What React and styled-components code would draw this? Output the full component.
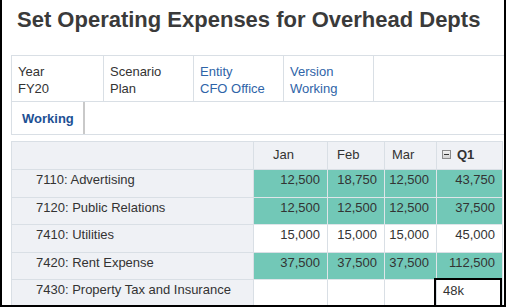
import React from "react";
import styled, { createGlobalStyle } from "styled-components";

const GlobalStyle = createGlobalStyle`
    html, body {
        margin: 0;
        padding: 0;
        background: #ffffff;
    }
    body {
        font-family: "Liberation Sans", Arial, sans-serif;
        color: #333333;
    }
`;

const LINE = "#d9dfe5";
const TEAL = "#72c8b7";
const SHADE = "#eff1f5";

const Frame = styled.div`
    width: 506px;
    height: 307px;
    box-sizing: border-box;
    border: 2px solid #000;
    border-top: none;
    overflow: hidden;
    background: #fff;
`;

const Title = styled.h1`
    margin: 0;
    padding: 7px 0 0 15px;
    font-size: 22px;
    line-height: 26px;
    font-weight: bold;
    color: #3a3a3a;
    white-space: nowrap;
`;

const Content = styled.div`
    padding: 22px 0 0 9px;
`;

const PovBox = styled.div`
    width: calc(100% + 4px);
    box-sizing: border-box;
    border: 1px solid ${LINE};
`;

const PovRow = styled.div`
    display: flex;
    height: 45px;
    border-bottom: 1px solid ${LINE};
`;

const PovCell = styled.div`
    width: ${(p) => p.$w}px;
    box-sizing: border-box;
    padding: 7px 0 0 6px;
    border-right: 1px solid ${LINE};
    font-size: 13px;
    line-height: 17px;
    color: ${(p) => (p.$link ? "#2f64a8" : "#333")};
    white-space: nowrap;
`;

const TabRow = styled.div`
    display: flex;
    height: 32px;
`;

const Tab = styled.div`
    width: 73px;
    box-sizing: border-box;
    padding-left: 10px;
    display: flex;
    align-items: center;
    border-right: 2px solid #c9c9c9;
    font-size: 13px;
    font-weight: bold;
    color: #1c5094;
`;

const Grid = styled.div`
    margin-top: 6px;
    display: grid;
    grid-template-columns: 242px 74px 57px 52px 66px;
    grid-template-rows: 28px repeat(5, 27.5px);
    border-left: 1px solid ${LINE};
    border-top: 1px solid ${LINE};
    width: max-content;
`;

const Cell = styled.div`
    position: relative;
    box-sizing: border-box;
    display: flex;
    align-items: flex-start;
    padding-top: 2px;
    line-height: 15px;
    border-right: 1px solid ${LINE};
    border-bottom: 1px solid ${LINE};
    font-size: 13px;
    color: #333;
    white-space: nowrap;
`;

const HeadCell = styled(Cell)`
    background: ${SHADE};
    align-items: center;
    padding-top: 0;
    padding-bottom: 2px;
    padding-left: ${(p) => p.$pad || 0}px;
    font-weight: ${(p) => (p.$bold ? "bold" : "normal")};
    gap: 6px;
`;

const LabelCell = styled(Cell)`
    background: ${SHADE};
    padding-left: 24px;
`;

const NumCell = styled(Cell)`
    justify-content: flex-end;
    padding-right: 7px;
    background: ${(p) => (p.$teal ? TEAL : "#fff")};
    border-color: ${(p) => (p.$teal ? "#dfe5e9" : LINE)};
`;

const EditCell = styled(Cell)`
    background: #fff;
    padding-left: 6px;
    padding-top: 3px;
    &::after {
        content: "";
        position: absolute;
        top: -2px;
        left: -3px;
        right: 0;
        bottom: -2px;
        border: 2px solid #000;
    }
`;

const Handle = styled.span`
    position: absolute;
    right: -2px;
    bottom: -3px;
    width: 5px;
    height: 5px;
    background: #000;
    z-index: 1;
`;

const CollapseIcon = () => (
    <svg width="9" height="9" viewBox="0 0 9 9">
        <defs>
            <linearGradient id="cg" x1="0" y1="0" x2="0" y2="1">
                <stop offset="0" stopColor="#f4f4f4" />
                <stop offset="1" stopColor="#cfcfcf" />
            </linearGradient>
        </defs>
        <rect x="0.5" y="0.5" width="8" height="8" fill="url(#cg)" stroke="#8a8a8a" />
        <rect x="2" y="4" width="5" height="1" fill="#333" />
    </svg>
);

const rows = [
    { label: "7110: Advertising", values: ["12,500", "18,750", "12,500", "43,750"], teal: true },
    { label: "7120: Public Relations", values: ["12,500", "12,500", "12,500", "37,500"], teal: true },
    { label: "7410: Utilities", values: ["15,000", "15,000", "15,000", "45,000"], teal: false },
    { label: "7420: Rent Expense", values: ["37,500", "37,500", "37,500", "112,500"], teal: true },
];

export default function App() {
    return (
        <Frame>
            <GlobalStyle />
            <Title>Set Operating Expenses for Overhead Depts</Title>
            <Content>
                <PovBox>
                    <PovRow>
                        <PovCell $w={92}>Year<br />FY20</PovCell>
                        <PovCell $w={90}>Scenario<br />Plan</PovCell>
                        <PovCell $w={90} $link>Entity<br />CFO Office</PovCell>
                        <PovCell $w={90} $link>Version<br />Working</PovCell>
                    </PovRow>
                    <TabRow>
                        <Tab>Working</Tab>
                    </TabRow>
                </PovBox>
                <Grid>
                    <HeadCell />
                    <HeadCell $pad={19}>Jan</HeadCell>
                    <HeadCell $pad={9}>Feb</HeadCell>
                    <HeadCell $pad={7}>Mar</HeadCell>
                    <HeadCell $pad={5} $bold>
                        <CollapseIcon />
                        Q1
                    </HeadCell>
                    {rows.map((r) => (
                        <React.Fragment key={r.label}>
                            <LabelCell>{r.label}</LabelCell>
                            {r.values.map((v, i) => (
                                <NumCell key={i} $teal={r.teal}>{v}</NumCell>
                            ))}
                        </React.Fragment>
                    ))}
                    <LabelCell>7430: Property Tax and Insurance</LabelCell>
                    <NumCell />
                    <NumCell />
                    <NumCell />
                    <EditCell>
                        48k
                        <Handle />
                    </EditCell>
                </Grid>
            </Content>
        </Frame>
    );
}
